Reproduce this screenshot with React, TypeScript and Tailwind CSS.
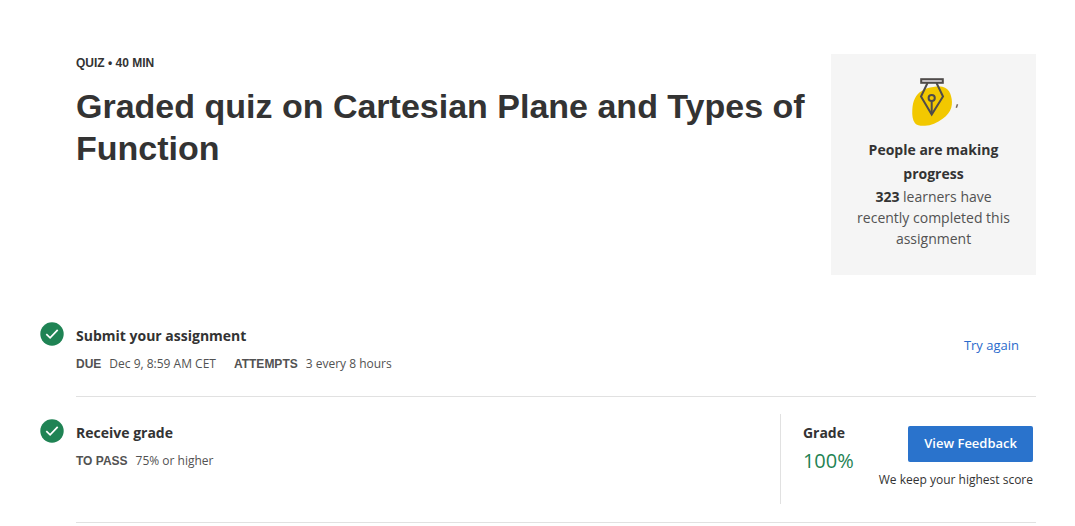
import React from 'react';

function CheckBadge() {
  return (
    <svg viewBox="0 0 24 24" className="size-6 shrink-0" role="img" aria-label="Completed">
      <circle cx="12" cy="12" r="11.7" fill="#1f8354" />
      <path d="M6.3 12.2l3.8 3.6 7.6-8" fill="none" stroke="#fff" strokeWidth="1.7" />
    </svg>
  );
}

function PenIcon() {
  return (
    <svg viewBox="0 0 53 52" className="h-[52px] w-[53px]" aria-hidden="true">
      <path
        d="M26.300 9C31 8.300 35.500 8.300 38 9.800C41.500 11.500 43.200 14.500 44 18C45.200 22 45.300 26 44.300 29.500C43 34 40 37.500 36 40.500C30 45 24 47.500 18 47.800C13.500 48 10 47.500 8 45.300C5.500 42 5 37 5.300 32C5.500 27.500 6.300 23.500 8 20.300C9.500 17 12 14.500 14.700 12.900C18 10.700 22 9.500 26.300 9Z"
        fill="#f2c800"
      />
      <g fill="none" stroke="#4f4b4a" strokeWidth="2">
        <rect x="14.200" y="1.200" width="21.600" height="3.600" fill="#dcd8dc" />
        <path d="M20.500 5L14 18.500L24.700 36.500L36 18.500L29.500 5" />
        <circle cx="24.700" cy="20" r="3.100" />
        <path d="M24.700 23.200V36" />
      </g>
      <path d="M50.500 26.200L49.300 29.700" stroke="#76665c" strokeWidth="1.500" />
    </svg>
  );
}

function Detail({ label, value }: { label: string; value: string }) {
  return (
    <div className="flex gap-2">
      <dt className="font-['Liberation_Sans',sans-serif] font-bold text-[#525252]">{label}</dt>
      <dd className="text-[#525252]">{value}</dd>
    </div>
  );
}

export default function App() {
  return (
    <main className="bg-white pt-[54px] pr-[39px] pl-10 font-['Open_Sans',sans-serif] text-[#333]">
      <header className="flex items-start gap-5 pl-9">
        <div className="flex-1 font-['Liberation_Sans',sans-serif] font-bold">
          <p className="text-xs leading-[18px]">QUIZ • 40 MIN</p>
          <h1 className="mt-[13px] text-[34px] leading-[42px]">
            Graded quiz on Cartesian Plane and Types of Function
          </h1>
        </div>
        <aside className="flex w-[205px] shrink-0 flex-col items-center bg-[#f5f5f5] px-6 pt-6 pb-[26px] text-center text-sm">
          <PenIcon />
          <h2 className="mt-2 leading-6 font-bold">People are making progress</h2>
          <p className="leading-[21px] text-[#525252]">
            <strong className="text-[#333]">323</strong> learners have recently completed this assignment
          </p>
        </aside>
      </header>

      <section className="mt-[47px] flex gap-3">
        <CheckBadge />
        <div className="flex flex-1 items-start justify-between border-b border-[#e1e1e1] pb-[23px]">
          <div>
            <h2 className="mt-1 text-sm leading-5 font-bold">Submit your assignment</h2>
            <dl className="mt-[9px] flex gap-[18px] text-xs leading-[18px]">
              <Detail label="DUE" value="Dec 9, 8:59 AM CET" />
              <Detail label="ATTEMPTS" value="3 every 8 hours" />
            </dl>
          </div>
          <button type="button" className="mt-[11px] mr-[17px] text-[13px] leading-6 font-medium text-[#2a6acc]">
            Try again
          </button>
        </div>
      </section>

      <section className="mt-[17px] flex gap-3">
        <div className="pt-[5px]">
          <CheckBadge />
        </div>
        <div className="flex flex-1 items-start justify-between border-b border-[#e1e1e1] pb-[18px]">
          <div className="pt-[9px]">
            <h2 className="text-sm leading-5 font-bold">Receive grade</h2>
            <dl className="mt-[9px] text-xs leading-[18px]">
              <Detail label="TO PASS" value="75% or higher" />
            </dl>
          </div>
          <div className="flex h-[90px] items-start gap-[25px] border-l border-[#e1e1e1] pr-[3px] pl-[22px]">
            <div className="pt-[9px]">
              <h3 className="text-sm leading-5 font-bold">Grade</h3>
              <p className="mt-1 text-xl leading-7 text-[#1f8354]">100%</p>
            </div>
            <div className="flex flex-col items-end pt-3">
              <button
                type="button"
                className="h-9 rounded-[2px] bg-[#2a73cc] px-4 text-[13px] font-semibold text-white"
              >
                View Feedback
              </button>
              <p className="mt-2 text-xs leading-5">We keep your highest score</p>
            </div>
          </div>
        </div>
      </section>
    </main>
  );
}
